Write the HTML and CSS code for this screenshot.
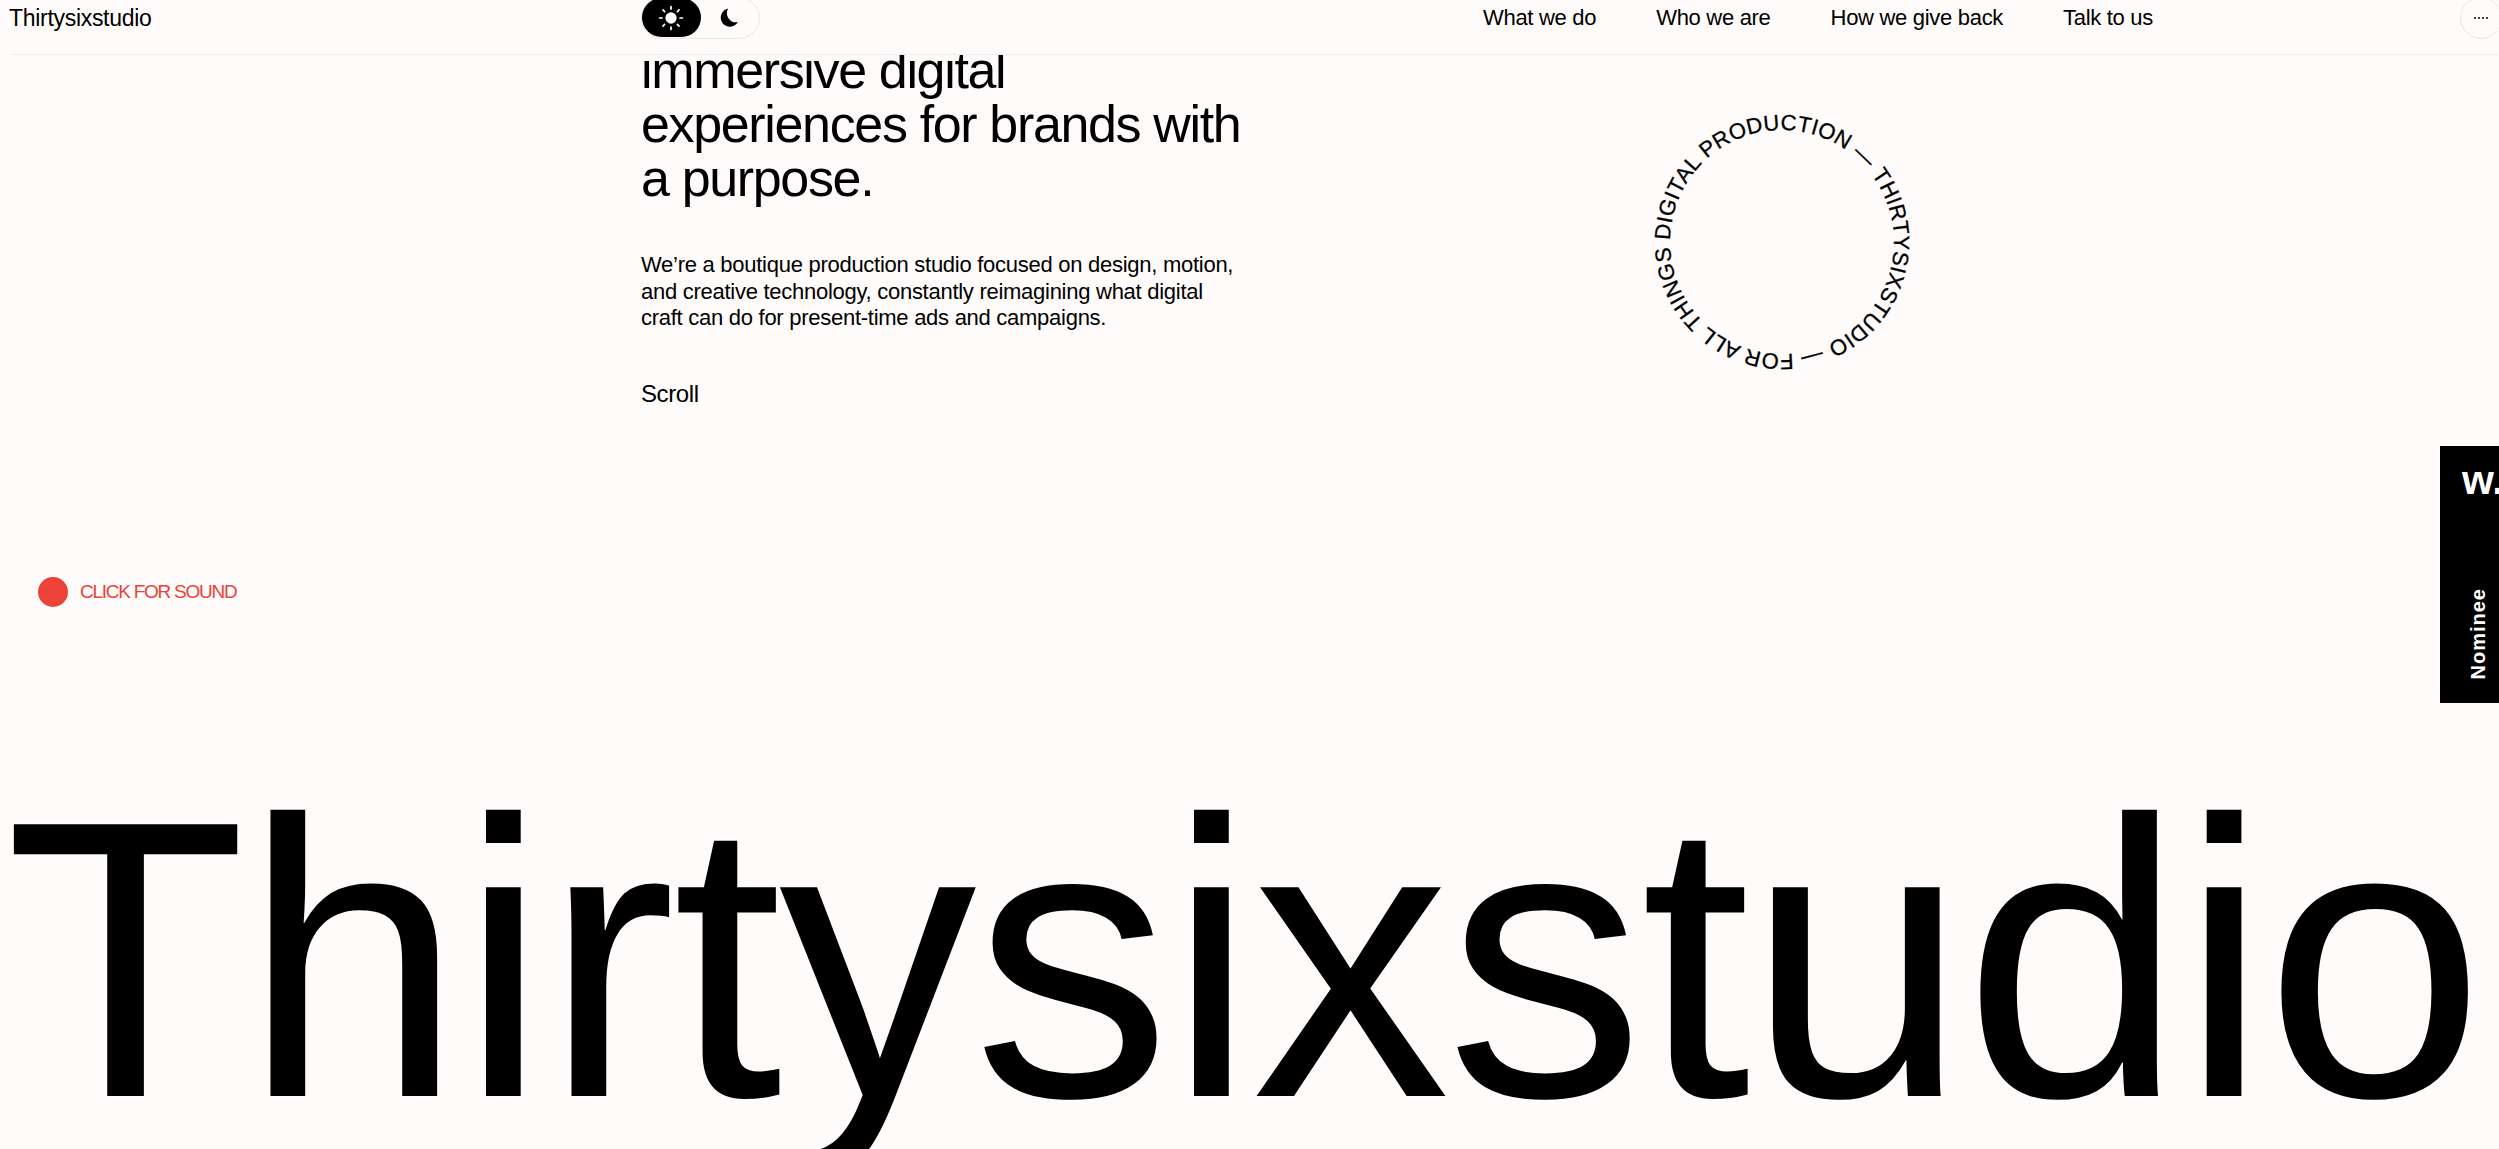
FILE: index.html
```html
<!DOCTYPE html>
<html lang="en">
<head>
<meta charset="utf-8">
<title>Thirtysixstudio</title>
<link rel="stylesheet" href="styles.css">
</head>
<body>
<header class="topbar">
  <a class="logo">Thirtysixstudio</a>
  <div class="theme">
    <span class="theme-btn active">
      <svg viewBox="0 0 24 24" width="26" height="26" fill="none" stroke="#fff" stroke-width="1.6" stroke-linecap="round"><circle cx="12" cy="12" r="5.2" fill="#fff" stroke="none"/><path d="M12 1.5v2.2M12 20.3v2.2M1.5 12h2.2M20.3 12h2.2M4.6 4.6l1.5 1.5M17.9 17.9l1.5 1.5M4.6 19.4l1.5-1.5M17.9 6.1l1.5-1.5"/></svg>
    </span>
    <span class="theme-btn">
      <svg viewBox="0 0 24 24" width="23" height="23"><path d="M10.6 2.6a9.6 9.6 0 0 0 10.2 14.2A9.6 9.6 0 1 1 10.6 2.6z" fill="#000"/></svg>
    </span>
  </div>
  <nav class="nav">
    <a>What we do</a>
    <a>Who we are</a>
    <a>How we give back</a>
    <a>Talk to us</a>
  </nav>
  <button class="more" aria-label="More"><i></i><i></i><i></i><i></i></button>
</header>

<main class="page">
  <section class="hero">
    <div class="intro">
      <h1>immersive digital experiences for brands with a&nbsp;purpose.</h1>
      <p>We’re a boutique production studio focused on design, motion, and creative technology, constantly reimagining what digital craft can do for present-time ads and campaigns.</p>
      <span class="scroll">Scroll</span>
    </div>
    <div class="spinner">
      <svg viewBox="0 0 260 260" width="260" height="260">
        <defs><path id="ring" d="M130 130m0-112a112 112 0 1 1 0 224a112 112 0 1 1 0-224"/></defs>
        <g transform="rotate(53 130 130)">
          <text class="ring-text"><textPath href="#ring" textLength="696">THIRTYSIXSTUDIO — FOR ALL THINGS DIGITAL PRODUCTION —</textPath></text>
        </g>
      </svg>
    </div>
  </section>
  <div class="sound"><span class="dot"></span><span>CLICK FOR SOUND</span></div>
  <div class="title">Thirtysixstudio</div>
</main>

<aside class="badge">
  <span class="badge-w">w.</span>
  <span class="badge-label">Nominee</span>
</aside>
</body>
</html>
```

FILE: styles.css
```css
* { box-sizing: border-box; }
html, body { margin: 0; height: 100%; }
body {
  background: #fefbfa;
  color: #000;
  font-family: "Liberation Sans", Arial, sans-serif;
  overflow: hidden;
  position: relative;
}
.topbar {
  position: relative;
  z-index: 2;
  height: 55px;
  margin-left: 12px;
  border-bottom: 1px solid #f0eeed;
  background: #fefbfa;
  display: flex;
  align-items: flex-start;
  font-size: 22px;
  letter-spacing: -0.3px;
}
.logo { margin-left: -3px; width: 632px; line-height: 36px; font-size: 23px; }
.theme {
  display: flex;
  width: 119px;
  height: 42px;
  margin-top: -3px;
  border: 1px solid #e9e6e4;
  border-radius: 21px;
}
.theme-btn {
  width: 59px;
  height: 39px;
  border-radius: 20px;
  display: flex;
  align-items: center;
  justify-content: center;
}
.theme-btn.active { background: #000; }
.nav {
  display: flex;
  gap: 60px;
  margin-left: 723px;
  line-height: 36px;
}
.more {
  position: absolute;
  right: -3px;
  top: -3px;
  width: 42px;
  height: 42px;
  padding: 0;
  border: 1px solid #e9e6e4;
  border-radius: 50%;
  background: transparent;
  display: flex;
  gap: 2px;
  align-items: center;
  justify-content: center;
}
.more i { width: 2px; height: 2px; background: #000; border-radius: 50%; }

.page { display: flex; flex-direction: column; }
.hero { display: flex; height: 522px; overflow: hidden; }
.intro { width: 640px; margin-left: 641px; margin-top: -12px; }
h1 {
  margin: 0;
  font-size: 52px;
  line-height: 54px;
  font-weight: 400;
  letter-spacing: -1.35px;
}
.intro p {
  width: 600px;
  margin: 47px 0 0;
  font-size: 22px;
  line-height: 26.5px;
  letter-spacing: -0.27px;
}
.scroll { display: block; margin-top: 48px; font-size: 24px; letter-spacing: -0.4px; }
.spinner { margin-left: 371px; margin-top: 57px; }
.ring-text { font-size: 22px; fill: #000; stroke: #000; stroke-width: 0.3px; }
.sound {
  display: flex;
  align-items: center;
  gap: 12px;
  margin-left: 38px;
  height: 30px;
  color: #ec4237;
  font-size: 19px;
  letter-spacing: -1.25px;
}
.dot { width: 30px; height: 30px; border-radius: 50%; background: #ec4237; }
.title {
  margin-top: 152px;
  margin-left: 5px;
  font-size: 395px;
  line-height: 400px;
  letter-spacing: -3.2px;
  white-space: nowrap;
}
.badge {
  position: absolute;
  z-index: 3;
  top: 446px;
  right: 0;
  width: 59px;
  height: 257px;
  background: #000;
  color: #fff;
  font-weight: 700;
  overflow: hidden;
}
.badge-w {
  position: absolute;
  left: 22px;
  top: 4px;
  font-size: 41px;
  line-height: 60px;
}
.badge-label {
  position: absolute;
  left: 28px;
  bottom: 24px;
  writing-mode: vertical-rl;
  transform: rotate(180deg);
  font-size: 20px;
  line-height: 20px;
  letter-spacing: 1px;
}
```
